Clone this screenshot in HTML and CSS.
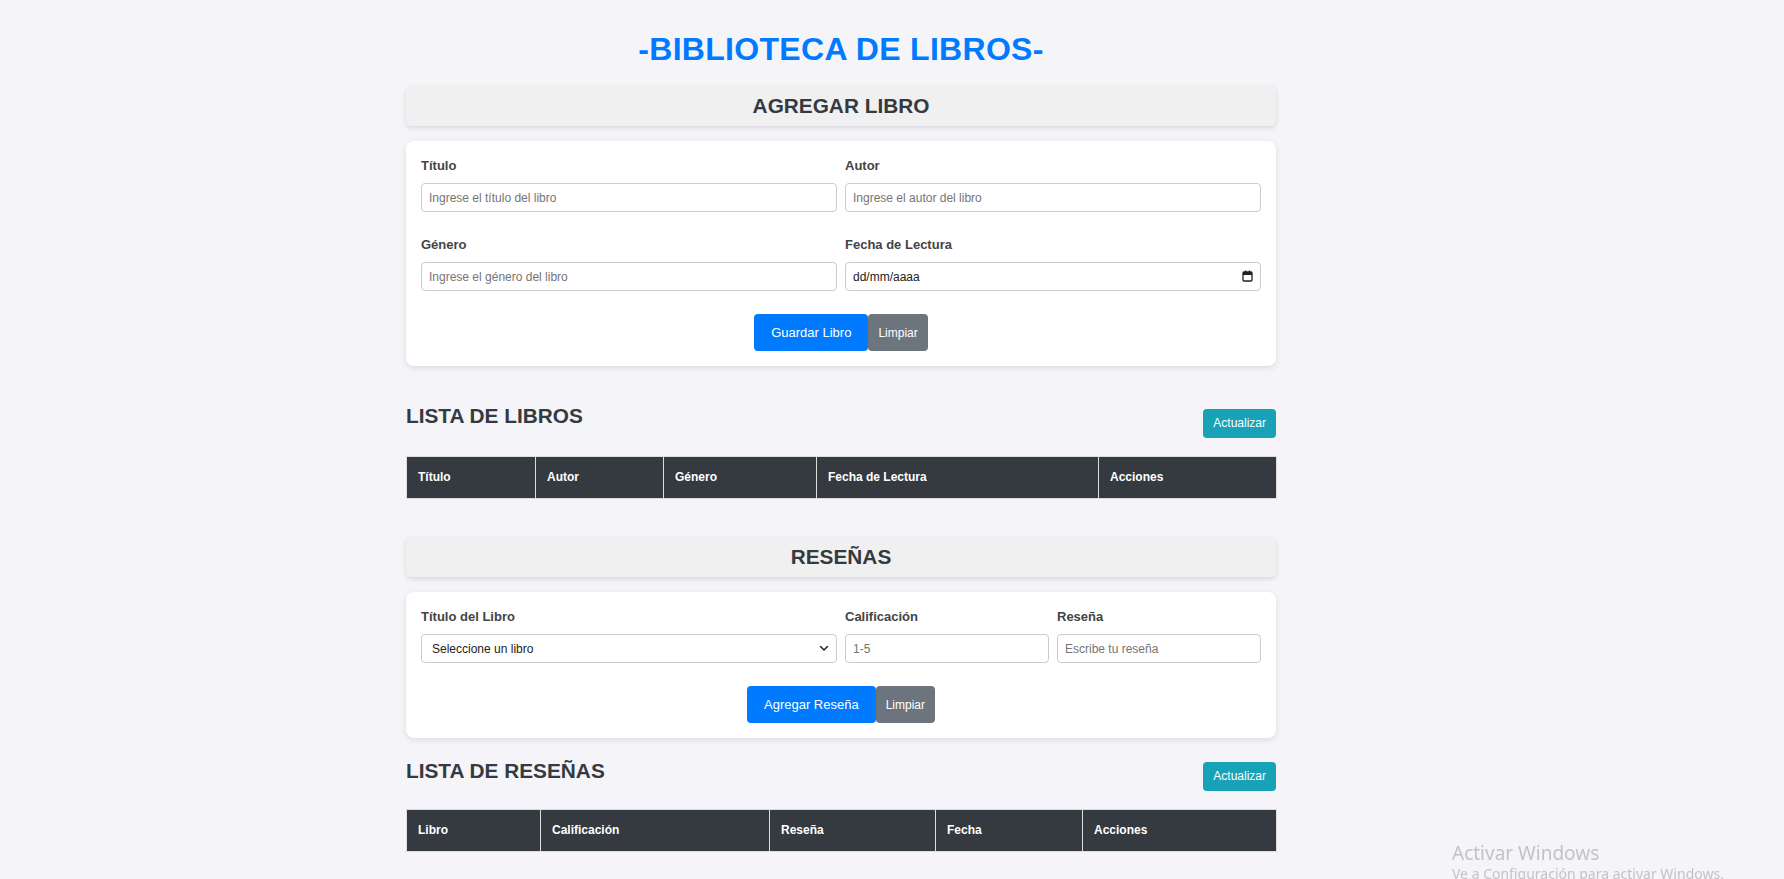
FILE: index.html
```html
<!DOCTYPE html>
<html lang="es">
<head>
<meta charset="utf-8">
<title>Biblioteca de Libros</title>
<link rel="stylesheet" href="styles.css">
</head>
<body>
<div class="page">
  <h1 class="site-title">-BIBLIOTECA DE LIBROS-</h1>

  <h2 class="panel-title">AGREGAR LIBRO</h2>
  <form class="card form-grid">
    <div class="field span-2">
      <label>Título</label>
      <input class="input" type="text" placeholder="Ingrese el título del libro">
    </div>
    <div class="field span-2">
      <label>Autor</label>
      <input class="input" type="text" placeholder="Ingrese el autor del libro">
    </div>
    <div class="field span-2">
      <label>Género</label>
      <input class="input" type="text" placeholder="Ingrese el género del libro">
    </div>
    <div class="field span-2">
      <label>Fecha de Lectura</label>
      <div class="input-wrap">
        <input class="input date" type="text" value="dd/mm/aaaa" readonly>
        <svg class="cal-icon" width="11" height="12" viewBox="0 0 11 12"><rect x="1" y="2" width="9" height="9" rx="1" fill="none" stroke="#222" stroke-width="1.3"/><rect x="1" y="2" width="9" height="3" fill="#222"/><rect x="3" y="0.5" width="1.2" height="2.5" fill="#222"/><rect x="6.8" y="0.5" width="1.2" height="2.5" fill="#222"/></svg>
      </div>
    </div>
    <div class="actions span-4">
      <button type="button" class="btn btn-primary">Guardar Libro</button>
      <button type="button" class="btn btn-secondary">Limpiar</button>
    </div>
  </form>

  <section class="list list-books">
    <div class="list-header">
      <h2 class="list-title">LISTA DE LIBROS</h2>
      <button type="button" class="btn btn-info">Actualizar</button>
    </div>
    <table class="data-table">
      <colgroup><col class="c129"><col class="c128"><col class="c153"><col class="c282"><col class="c178"></colgroup>
      <thead><tr><th>Título</th><th>Autor</th><th>Género</th><th>Fecha de Lectura</th><th>Acciones</th></tr></thead>
    </table>
  </section>

  <h2 class="panel-title panel-reviews">RESEÑAS</h2>
  <form class="card form-grid">
    <div class="field span-2">
      <label>Título del Libro</label>
      <div class="input-wrap">
        <select class="input select">
          <option>Seleccione un libro</option>
        </select>
        <svg class="chev" width="10" height="7" viewBox="0 0 10 7"><path d="M1.2 1.3 L5 5 L8.8 1.3" fill="none" stroke="#222" stroke-width="1.6"/></svg>
      </div>
    </div>
    <div class="field">
      <label>Calificación</label>
      <input class="input" type="text" placeholder="1-5">
    </div>
    <div class="field">
      <label>Reseña</label>
      <input class="input" type="text" placeholder="Escribe tu reseña">
    </div>
    <div class="actions span-4">
      <button type="button" class="btn btn-primary">Agregar Reseña</button>
      <button type="button" class="btn btn-secondary">Limpiar</button>
    </div>
  </form>

  <section class="list list-reviews">
    <div class="list-header">
      <h2 class="list-title">LISTA DE RESEÑAS</h2>
      <button type="button" class="btn btn-info">Actualizar</button>
    </div>
    <table class="data-table">
      <colgroup><col class="c134"><col class="c229"><col class="c166"><col class="c147"><col class="c194"></colgroup>
      <thead><tr><th>Libro</th><th>Calificación</th><th>Reseña</th><th>Fecha</th><th>Acciones</th></tr></thead>
    </table>
  </section>
</div>

<div class="watermark">
  <div class="wm-title">Activar Windows</div>
  <div class="wm-sub">Ve a Configuración para activar Windows.</div>
</div>
</body>
</html>
```

FILE: styles.css
```css
* { box-sizing: border-box; }

html, body {
  margin: 0;
  padding: 0;
}

body {
  background: #f4f4f9;
  font-family: "Liberation Sans", Arial, sans-serif;
  color: #333;
  padding-right: 102px;
  min-height: 879px;
}

.page {
  width: 870px;
  margin: 0 auto;
  padding-bottom: 30px;
}

.site-title {
  margin: 31px 0 18px;
  font-size: 32px;
  line-height: 37px;
  font-weight: bold;
  color: #007bff;
  text-align: center;
  letter-spacing: 0.3px;
}

.panel-title {
  margin: 0 0 15px;
  height: 40px;
  line-height: 40px;
  background: #f0f0f0;
  border-radius: 5px;
  box-shadow: 0 2px 5px rgba(0, 0, 0, 0.12);
  text-align: center;
  font-size: 20.8px;
  font-weight: bold;
  color: #343a40;
}

.panel-reviews {
  margin-top: 38px;
}

.card {
  background: #fff;
  border-radius: 8px;
  box-shadow: 0 2px 6px rgba(0, 0, 0, 0.1);
  padding: 17px 15px 15px;
}

.form-grid {
  display: grid;
  grid-template-columns: repeat(4, 1fr);
  column-gap: 8px;
  row-gap: 25px;
}

.span-2 { grid-column: span 2; }
.span-4 { grid-column: span 4; }

.field {
  display: flex;
  flex-direction: column;
}

.field label {
  font-size: 13px;
  line-height: 15px;
  font-weight: bold;
  color: #444;
  margin-bottom: 10px;
}

.input {
  width: 100%;
  height: 29px;
  border: 1px solid #ccc;
  border-radius: 4px;
  padding: 0 7px;
  font-family: "Liberation Sans", Arial, sans-serif;
  font-size: 12px;
  color: #333;
  background: #fff;
  outline: none;
}

.input::placeholder {
  color: #757575;
}

.input-wrap {
  position: relative;
}

.date {
  color: #222;
}

.cal-icon {
  position: absolute;
  right: 8px;
  top: 8px;
}

.select {
  appearance: none;
  -webkit-appearance: none;
  padding-left: 10px;
  color: #222;
}

.chev {
  position: absolute;
  right: 8px;
  top: 11px;
  pointer-events: none;
}

.actions {
  display: flex;
  justify-content: center;
  margin-top: -2px;
}

.btn {
  border: none;
  border-radius: 4px;
  color: #fff;
  font-family: "Liberation Sans", Arial, sans-serif;
  cursor: pointer;
}

.btn-primary {
  background: #007bff;
  font-size: 13px;
  line-height: 15px;
  padding: 11px 17px;
}

.btn-secondary {
  background: #6c757d;
  font-size: 12px;
  line-height: 14px;
  padding: 0 10px;
}

.btn-info {
  background: #17a2b8;
  font-size: 12px;
  line-height: 15px;
  padding: 7px 10px;
  height: 29px;
}

.list-books {
  margin-top: 38px;
}

.list-reviews {
  margin-top: 21px;
}

.list-header {
  display: flex;
  justify-content: space-between;
  align-items: flex-end;
}

.list-title {
  margin: 0 0 10px;
  font-size: 20.8px;
  line-height: 24px;
  font-weight: bold;
  color: #343a40;
}

.list-reviews .list-title {
  margin-bottom: 8px;
}

.data-table {
  width: 100%;
  margin-top: 18px;
  border-collapse: collapse;
  table-layout: fixed;
  border: 1px solid #ddd;
}

.list-reviews .data-table {
  margin-top: 18px;
}

.data-table th {
  background: #343a40;
  color: #fff;
  font-size: 12px;
  line-height: 15px;
  font-weight: bold;
  text-align: left;
  padding: 13px 11px;
  border: 1px solid #ddd;
}

.c129 { width: 129px; }
.c128 { width: 128px; }
.c153 { width: 153px; }
.c282 { width: 282px; }
.c178 { width: 178px; }
.c134 { width: 134px; }
.c229 { width: 229px; }
.c166 { width: 166px; }
.c147 { width: 147px; }
.c194 { width: 194px; }

.watermark {
  position: fixed;
  left: 1452px;
  top: 841px;
  font-family: "Noto Sans", "Open Sans", sans-serif;
  color: #c3c3c7;
  pointer-events: none;
}

.wm-title {
  font-size: 19px;
  line-height: 24px;
}

.wm-sub {
  font-size: 14px;
  line-height: 18px;
}
```
